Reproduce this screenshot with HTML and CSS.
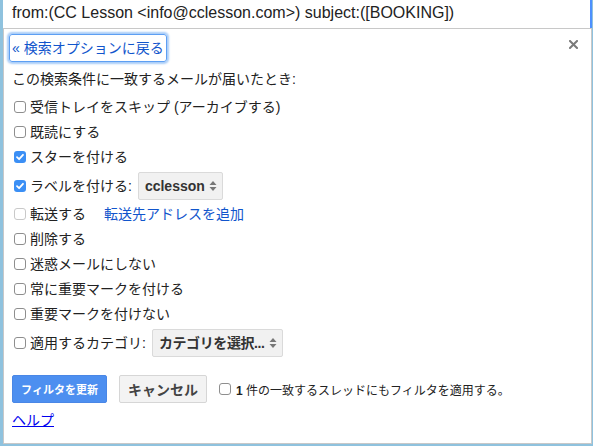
FILE: index.html
```html
<!DOCTYPE html>
<html lang="ja">
<head>
<meta charset="utf-8">
<link rel="stylesheet" href="styles.css">
</head>
<body>
<div class="wrap">
  <div class="query">from:(CC Lesson &lt;info@cclesson.com&gt;) subject:([BOOKING])</div>
  <div class="dialog">
    <div class="top">
      <a class="back" href="#">« 検索オプションに戻る</a>
      <span class="close"><svg width="9" height="9" viewBox="0 0 9 9"><path d="M1 1L8 8M8 1L1 8" stroke="#7a7a7a" stroke-width="2" stroke-linecap="square"/></svg></span>
    </div>
    <div class="intro">この検索条件に一致するメールが届いたとき:</div>
    <div class="opts">
      <div class="row"><span class="cb"></span><span>受信トレイをスキップ (アーカイブする)</span></div>
      <div class="row"><span class="cb"></span><span>既読にする</span></div>
      <div class="row"><span class="cb on"><svg width="12" height="12" viewBox="0 0 12 12"><path d="M3 6.2L5.1 8.2L9 3.8" fill="none" stroke="#fff" stroke-width="1.8" stroke-linecap="round" stroke-linejoin="round"/></svg></span><span>スターを付ける</span></div>
      <div class="row sel"><span class="cb on"><svg width="12" height="12" viewBox="0 0 12 12"><path d="M3 6.2L5.1 8.2L9 3.8" fill="none" stroke="#fff" stroke-width="1.8" stroke-linecap="round" stroke-linejoin="round"/></svg></span><span>ラベルを付ける:</span><span class="select"><span>cclesson</span><svg class="arr" width="8" height="12" viewBox="0 0 8 12"><path d="M4 1L7.5 5H0.5Z M4 11L7.5 7H0.5Z" fill="#777"/></svg></span></div>
      <div class="row"><span class="cb dis"></span><span>転送する</span><a class="fwd" href="#">転送先アドレスを追加</a></div>
      <div class="row"><span class="cb"></span><span>削除する</span></div>
      <div class="row"><span class="cb"></span><span>迷惑メールにしない</span></div>
      <div class="row"><span class="cb"></span><span>常に重要マークを付ける</span></div>
      <div class="row"><span class="cb"></span><span>重要マークを付けない</span></div>
      <div class="row sel"><span class="cb"></span><span>適用するカテゴリ:</span><span class="select"><span class="cat">カテゴリを選択...</span><svg class="arr" width="8" height="12" viewBox="0 0 8 12"><path d="M4 1L7.5 5H0.5Z M4 11L7.5 7H0.5Z" fill="#777"/></svg></span></div>
    </div>
    <div class="actions">
      <span class="btn primary">フィルタを更新</span>
      <span class="btn">キャンセル</span>
      <span class="apply"><span class="cb"></span><span><b>1</b> 件の一致するスレッドにもフィルタを適用する。</span></span>
    </div>
    <a class="help" href="#">ヘルプ</a>
  </div>
</div>
</body>
</html>
```

FILE: styles.css
```css
html, body {
  margin: 0;
  padding: 0;
}
body {
  width: 593px;
  height: 446px;
  overflow: hidden;
  background: #8fc2de;
  font-family: "Liberation Sans", "Noto Sans CJK JP", sans-serif;
  color: #222;
}
.wrap {
  margin-left: 3px;
  width: 589px;
}
.query {
  box-sizing: border-box;
  height: 28px;
  background: #fff;
  border-right: 2px solid #4d90fe;
  padding-left: 9px;
  font-size: 16px;
  line-height: 26px;
  color: #222;
  white-space: nowrap;
}
.dialog {
  box-sizing: border-box;
  height: 416px;
  background: #fff;
  border: 1px solid #c8c8c8;
  padding: 0 8px;
}
.top {
  display: flex;
  justify-content: space-between;
  align-items: flex-start;
  padding-top: 5px;
}
.back {
  display: inline-block;
  margin-left: -3px;
  padding: 5px 2px;
  border: 1px solid #5d9ff3;
  border-radius: 3px;
  box-shadow: 0 0 2px 2px #a9cdf8;
  font-size: 14px;
  line-height: 16px;
  color: #1155cc;
  text-decoration: none;
}
.close {
  display: block;
  margin-top: 6px;
  margin-right: 5px;
  line-height: 0;
}
.intro {
  margin-top: 7px;
  font-size: 14px;
  line-height: 20px;
}
.opts {
  margin-top: 5px;
  display: flex;
  flex-direction: column;
}
.row {
  display: flex;
  align-items: center;
  height: 25px;
  font-size: 14px;
  line-height: 18px;
  white-space: nowrap;
}
.row.sel {
  height: 31px;
  padding-top: 1px;
}
.cb {
  box-sizing: border-box;
  flex: none;
  width: 12px;
  height: 12px;
  margin-left: 2px;
  margin-right: 4px;
  border: 1px solid #8e8e8e;
  border-radius: 3px;
  background: #fff;
  line-height: 0;
}
.cb.on {
  border: none;
  background: #3b8ff5;
}
.cb.dis {
  border-color: #c9c9c9;
}
.fwd {
  margin-left: 18px;
  color: #1155cc;
  text-decoration: none;
}
.select {
  box-sizing: border-box;
  display: inline-flex;
  align-items: center;
  height: 28px;
  margin-left: 6px;
  padding: 0 5px 0 6px;
  background: #f1f1f1;
  border: 1px solid #dadada;
  border-radius: 2px;
  font-weight: bold;
  color: #333;
}
.select .cat {
  letter-spacing: -0.4px;
}
.arr {
  margin-left: 4px;
}
.actions {
  display: flex;
  align-items: center;
  margin-top: 17px;
}
.btn {
  box-sizing: border-box;
  display: inline-flex;
  align-items: center;
  justify-content: center;
  height: 28px;
  padding: 0 8px;
  margin-right: 12px;
  border: 1px solid #d6d6d6;
  border-radius: 2px;
  background: #f3f3f3;
  font-size: 14px;
  font-weight: bold;
  color: #444;
}
.btn.primary {
  width: 95px;
  background: #4d8ff0;
  border-color: #4a87e6;
  color: #fff;
  font-size: 11px;
}
.apply {
  display: flex;
  align-items: center;
  font-size: 12px;
}
.apply .cb {
  margin-left: 0;
  margin-right: 5px;
}
.help {
  display: inline-block;
  margin-top: 8px;
  font-size: 14px;
  line-height: 18px;
  color: #0000ee;
}
```
